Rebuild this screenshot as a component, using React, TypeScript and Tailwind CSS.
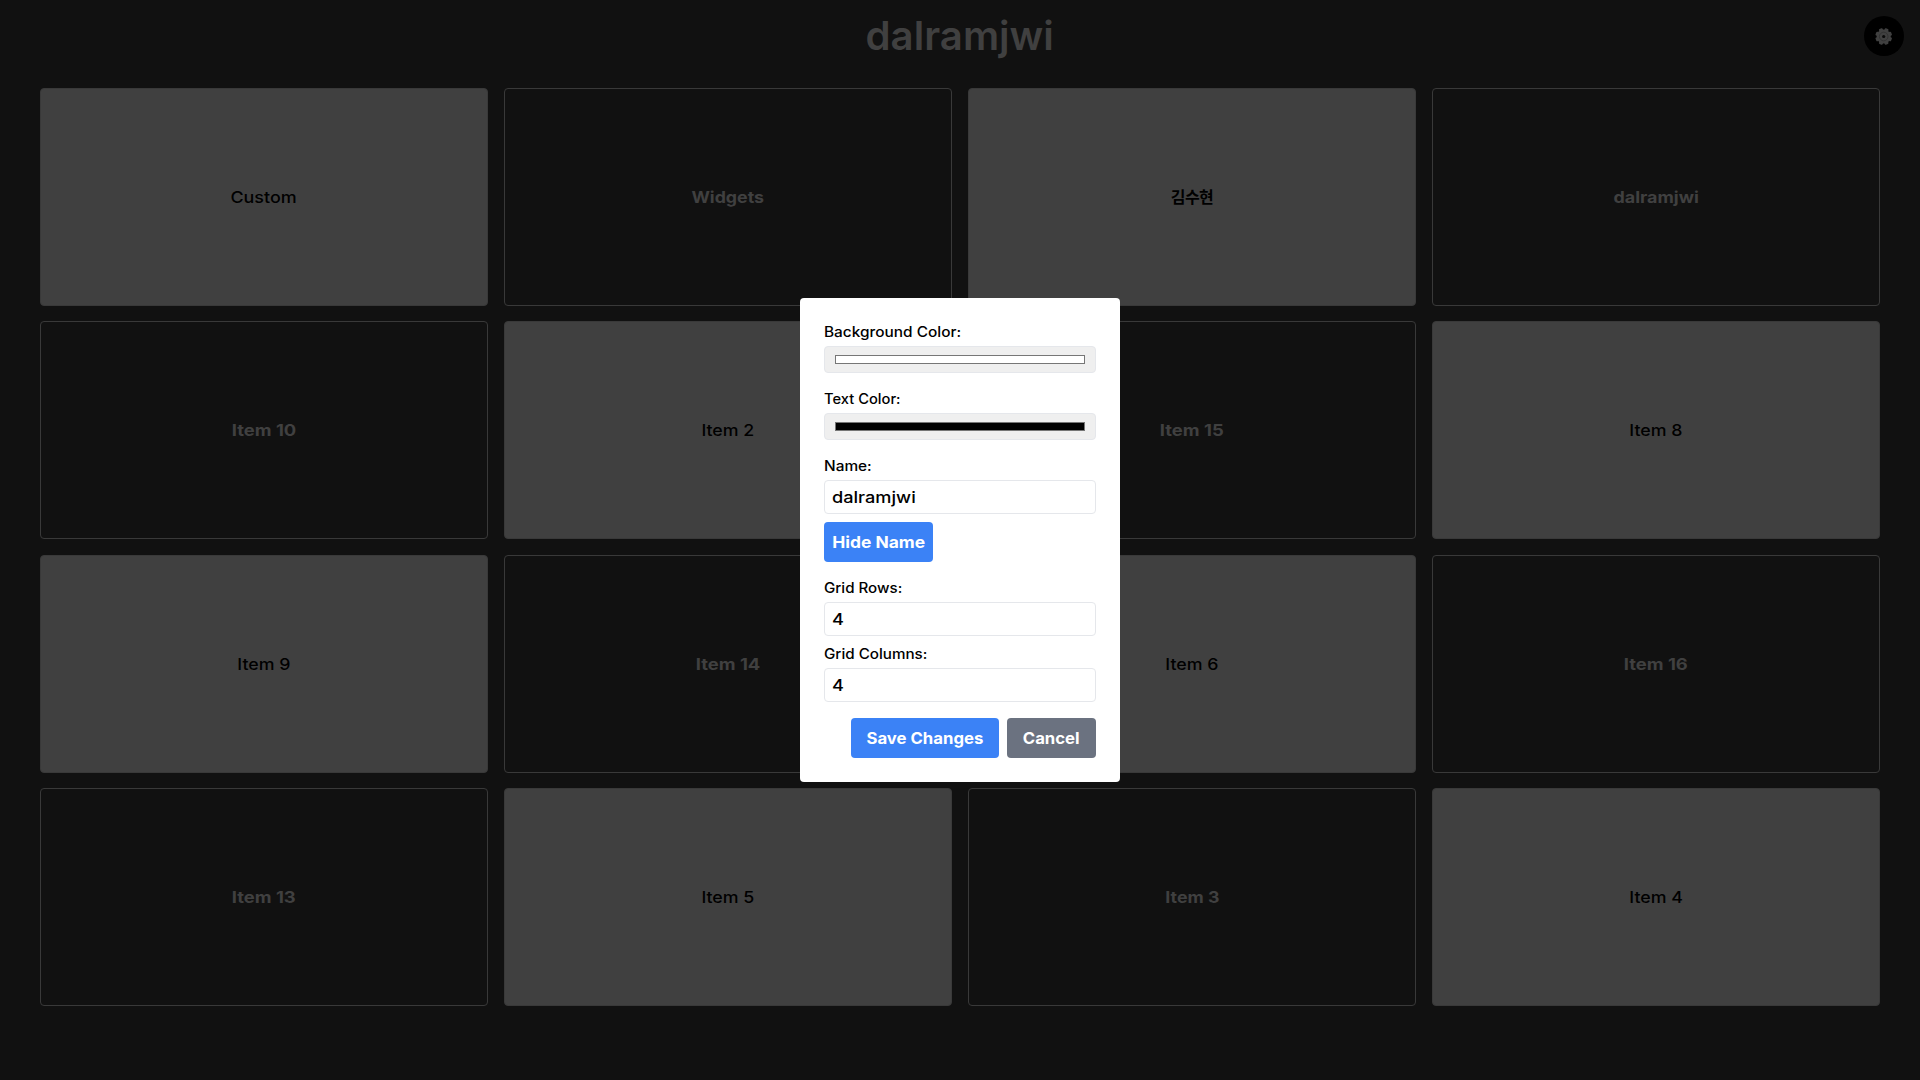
const cards: [string, string][] = [
  ['Custom', 'scale-x-[1.12]'],
  ['Widgets', 'scale-x-[1.11]'],
  ['김수현', 'font-bold -tracking-[0.5px]'],
  ['dalramjwi', 'scale-x-[1.12]'],
  ['Item 10', 'scale-x-[1.15]'],
  ['Item 2', 'scale-x-[1.11]'],
  ['Item 15', 'scale-x-[1.15]'],
  ['Item 8', 'scale-x-[1.11]'],
  ['Item 9', 'scale-x-[1.11]'],
  ['Item 14', 'scale-x-[1.15]'],
  ['Item 6', 'scale-x-[1.11]'],
  ['Item 16', 'scale-x-[1.15]'],
  ['Item 13', 'scale-x-[1.15]'],
  ['Item 5', 'scale-x-[1.11]'],
  ['Item 3', 'scale-x-[1.11]'],
  ['Item 4', 'scale-x-[1.11]'],
];

function Label({ children, stretch }: { children: string; stretch: string }) {
  return (
    <div className="mb-1 flex h-5 text-sm font-medium text-black">
      <span className={`inline-block origin-left ${stretch}`}>{children}</span>
    </div>
  );
}

function Field({ value, className = '' }: { value: string; className?: string }) {
  return (
    <div
      role="textbox"
      className={`h-[34px] rounded border border-gray-200 bg-white px-[7px] py-1 text-base leading-6 font-medium text-black ${className}`}
    >
      <span className="inline-block origin-left scale-x-[1.135]">{value}</span>
    </div>
  );
}

function Swatch({ fill }: { fill: string }) {
  return (
    <div className="mb-4 h-[27px] rounded border border-gray-200 bg-[#efefef] px-[10px] py-2">
      <div className={`h-[9px] border border-[#767676] ${fill}`} />
    </div>
  );
}

function Gear() {
  return (
    <svg width="18" height="18" viewBox="-8.7 -9.5 18 18" fill="#404040">
      {[0, 45, 90, 135].map((a) => (
        <rect key={a} x="-2" y="-8.4" width="4" height="16.8" rx="1" transform={`rotate(${a + 22.5})`} />
      ))}
      <circle r="7" />
      <circle r="4.3" fill="none" stroke="#303030" strokeWidth="0.9" />
      <circle r="1.6" fill="#0a0a0a" />
    </svg>
  );
}

export default function App() {
  return (
    <div className="relative h-[1080px] w-[1920px] overflow-hidden bg-[#111111] font-['Inter','Noto_Sans_CJK_KR',sans-serif]">
      <header className="flex h-[88px] justify-center pt-4">
        <h1 className="h-10 text-[40px] leading-10 font-semibold text-[#404040]">
          <span className="inline-block scale-x-[1.005]">dalramjwi</span>
        </h1>
      </header>
      <button className="absolute top-4 right-4 flex size-10 items-center justify-center rounded-full bg-black">
        <Gear />
      </button>
      <main className="mx-10 grid h-[918px] grid-cols-4 grid-rows-4 gap-x-4 gap-y-[15.6px]">
        {cards.map(([name, stretch], i) => {
          const light = (i + Math.floor(i / 4)) % 2 === 0;
          return (
            <div
              key={name}
              className={`flex items-center justify-center rounded border border-[#393939] text-base ${
                light ? 'bg-[#404040] font-medium text-black' : 'bg-[#111111] font-bold text-[#404040]'
              }`}
            >
              <span className={`inline-block ${stretch}`}>{name}</span>
            </div>
          );
        })}
      </main>
      <section className="absolute top-[298px] left-[800px] h-[484px] w-80 rounded bg-white p-6">
        <Label stretch="scale-x-[1.1]">Background Color:</Label>
        <Swatch fill="bg-white" />
        <Label stretch="scale-x-[1.05]">Text Color:</Label>
        <Swatch fill="bg-black" />
        <Label stretch="scale-x-[1.1]">Name:</Label>
        <Field value="dalramjwi" />
        <button className="mt-2 mb-4 flex h-10 w-[109px] items-center justify-center rounded bg-[#3b82f6] text-base font-bold text-white">
          <span className="inline-block scale-x-[1.09] whitespace-nowrap">Hide Name</span>
        </button>
        <Label stretch="scale-x-[1.08]">Grid Rows:</Label>
        <Field value="4" className="mb-2" />
        <Label stretch="scale-x-[1.085]">Grid Columns:</Label>
        <Field value="4" />
        <div className="mt-4 flex justify-end gap-2 text-base font-bold text-white">
          <button className="h-10 w-[148px] rounded bg-[#3b82f6]">
            <span className="inline-block scale-x-[1.045] whitespace-nowrap">Save Changes</span>
          </button>
          <button className="h-10 w-[89px] rounded bg-[#6b7280]">
            <span className="inline-block scale-x-[1.045]">Cancel</span>
          </button>
        </div>
      </section>
    </div>
  );
}
